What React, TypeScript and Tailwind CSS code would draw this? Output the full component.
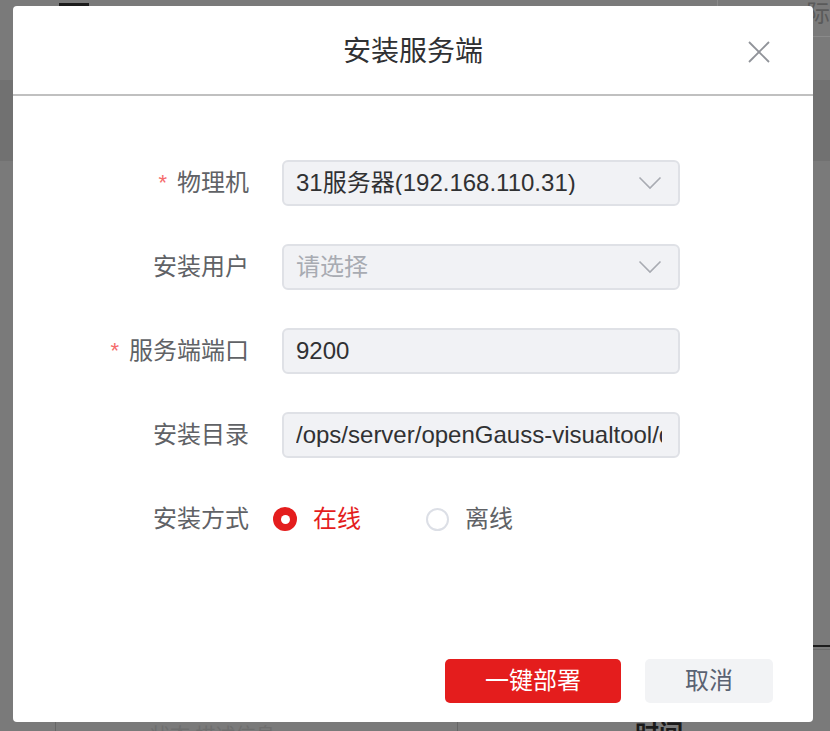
import React from "react";

const font = { fontFamily: '"Liberation Sans", "Noto Sans CJK SC", sans-serif' };

function Chevron() {
  return (
    <svg width="24" height="14" viewBox="0 0 24 14" className="shrink-0">
      <polyline points="1.5,1.5 12,12 22.5,1.5" fill="none" stroke="#a8abb2" strokeWidth="1.6" />
    </svg>
  );
}

function Field({ children, select }: { children: React.ReactNode; select?: boolean }) {
  return (
    <div className="w-[398px] h-[46px] rounded-[6px] border-2 border-[#dfe1e6] bg-[#f1f2f5] flex items-center pl-[12px] pr-[16px] overflow-hidden">
      <div className="flex-1 min-w-0 overflow-hidden whitespace-nowrap text-[24px] leading-none">{children}</div>
      {select ? <Chevron /> : null}
    </div>
  );
}

function Label({ text, required }: { text: string; required?: boolean }) {
  return (
    <div className="w-[269px] pr-[33px] flex justify-end items-center text-[24px] text-[#606266] leading-none whitespace-nowrap">
      {required ? <span className="text-[#f56c6c] mr-[10px] text-[22px]">*</span> : null}
      <span>{text}</span>
    </div>
  );
}

export default function App() {
  return (
    <div className="relative w-[830px] h-[731px] overflow-hidden bg-[#7a7a7a]" style={font}>
      {/* dimmed page behind the overlay */}
      <div className="absolute left-0 top-[80px] w-full h-[81px] bg-[#717171]" />
      <div className="absolute left-[59px] top-[3px] w-[30px] h-[3px] bg-[#1c1c1c]" />
      <div className="absolute left-[717px] top-0 w-px h-[36px] bg-[#8a8a8a]" />
      <div className="absolute left-[813px] top-[36px] w-[17px] h-px bg-[#8a8a8a]" />
      <div className="absolute left-[806px] top-[2px] text-[24px] leading-none text-[#5a5a5a]">际</div>
      <div className="absolute left-[813px] top-[645px] w-[17px] h-[2px] bg-[#1c1c1c]" />
      <div className="absolute left-[813px] top-[649px] w-[17px] h-px bg-[#6a6a6a]" />
      <div className="absolute left-[55px] top-[720px] w-px h-[11px] bg-[#666]" />
      <div className="absolute left-[457px] top-[720px] w-px h-[11px] bg-[#666]" />
      <div className="absolute left-[635px] top-[722px] text-[24px] font-bold leading-none text-[#1a1a1a]">时间</div>
      <div className="absolute left-[150px] top-[726px] text-[20px] leading-none text-[#6e6e6e]">状态 描述信息</div>

      {/* dialog */}
      <div className="relative ml-[13px] mt-[6px] w-[800px] h-[716px] bg-white rounded-[4px] flex flex-col">
        <div className="relative h-[90px] shrink-0 border-b-2 border-[#c0c0c0] flex items-center justify-center">
          <div className="text-[28px] leading-none text-[#303133] mt-[4px]">安装服务端</div>
          <svg className="absolute left-[735px] top-[35px]" width="22" height="22" viewBox="0 0 22 22">
            <line x1="1" y1="1" x2="21" y2="21" stroke="#909399" strokeWidth="1.8" />
            <line x1="21" y1="1" x2="1" y2="21" stroke="#909399" strokeWidth="1.8" />
          </svg>
        </div>

        <div className="flex-1 flex flex-col pt-[64px] gap-[38px]">
          <div className="flex items-center">
            <Label text="物理机" required />
            <Field select>
              <span className="text-[#303133]">31服务器(192.168.110.31)</span>
            </Field>
          </div>
          <div className="flex items-center">
            <Label text="安装用户" />
            <Field select>
              <span className="text-[#a8abb2]">请选择</span>
            </Field>
          </div>
          <div className="flex items-center">
            <Label text="服务端端口" required />
            <Field>
              <span className="text-[#303133]">9200</span>
            </Field>
          </div>
          <div className="flex items-center">
            <Label text="安装目录" />
            <Field>
              <span className="text-[#303133]">/ops/server/openGauss-visualtool/data</span>
            </Field>
          </div>
          <div className="flex items-center h-[46px]">
            <Label text="安装方式" />
            <div className="flex items-center ml-[-9px]">
              <div className="w-[24px] h-[24px] rounded-full bg-[#e41d1d] flex items-center justify-center">
                <div className="w-[9px] h-[9px] rounded-full bg-white" />
              </div>
              <span className="ml-[16px] text-[24px] leading-none text-[#e41d1d]">在线</span>
              <div className="ml-[65px] w-[23px] h-[23px] rounded-full border-2 border-[#dcdfe6] bg-white" />
              <span className="ml-[16px] text-[24px] leading-none text-[#606266]">离线</span>
            </div>
          </div>
        </div>

        <div className="flex justify-end gap-[24px] pr-[40px] pb-[19px]">
          <div className="w-[176px] h-[44px] rounded-[5px] bg-[#e41d1d] flex items-center justify-center text-[24px] leading-none text-white">
            一键部署
          </div>
          <div className="w-[128px] h-[44px] rounded-[5px] bg-[#f2f3f5] flex items-center justify-center text-[24px] leading-none text-[#5a6272]">
            取消
          </div>
        </div>
      </div>
    </div>
  );
}
